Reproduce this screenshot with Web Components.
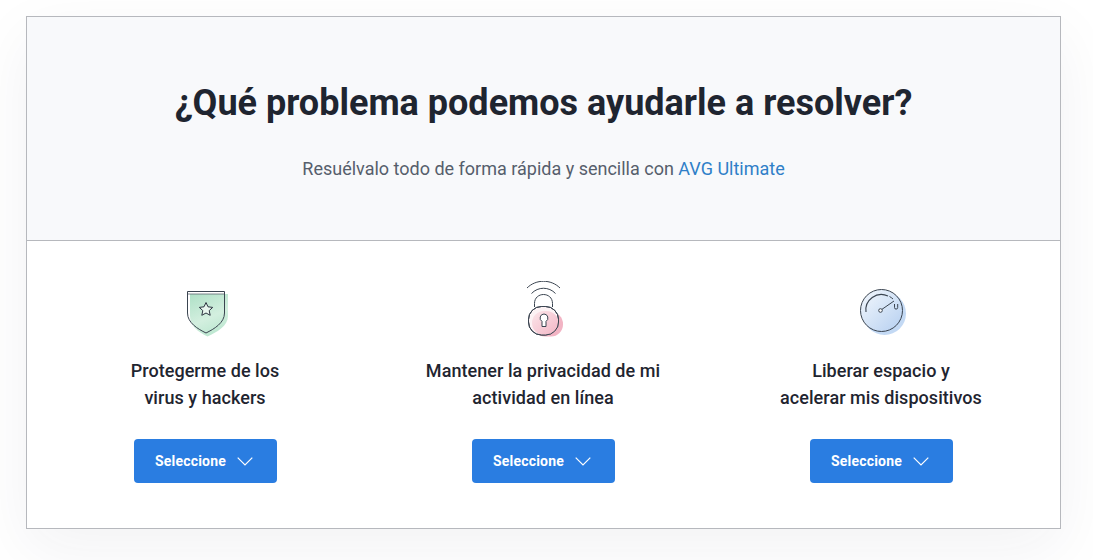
<!DOCTYPE html>
<html lang="es"><head><meta charset="utf-8"><title>AVG</title>
<style>
html,body{margin:0;height:560px;overflow:hidden;background:#fff}
body{font-family:Roboto,"Liberation Sans",sans-serif;color:#1f2530;padding:16px 32px 0 26px;box-sizing:border-box}
problem-card a{color:#2f7fc8;text-decoration:none}
</style></head><body>
<problem-card>
  <span slot="title">¿Qué problema podemos ayudarle a resolver?</span>
  <span slot="sub">Resuélvalo todo de forma rápida y sencilla con <a>AVG Ultimate</a></span>
  <problem-option>
    <svg slot="icon" width="60" height="60" viewBox="175 281 60 60" fill="none">
      <defs><linearGradient id="g1" x1="0" y1="0" x2=".4" y2="1"><stop offset="0" stop-color="#aee0c6"/><stop offset=".65" stop-color="#d3efdf"/><stop offset="1" stop-color="#bfe8d2"/></linearGradient></defs>
      <path d="M190 294H228V316C228 326 217 332 207.500 336.500C198 332 190 326 190 316Z" fill="url(#g1)"/>
      <path d="M187.500 291.500H224.500V313C224.500 323 214 329 206 333C198 329 187.500 323 187.500 313Z" stroke="#3a4450" stroke-width="1"/>
      <path d="M188 294H224" stroke="#5b6570" stroke-width=".8"/>
      <path d="M206 302.500L208 306.800L212.700 307.400L209.200 310.600L210.200 315.300L206 313L201.800 315.300L202.800 310.600L199.300 307.400L204 306.800Z" stroke="#2c3440" stroke-width="1" fill="#e8f6ee"/>
    </svg>
    <span>Protegerme de los<br>virus y hackers</span>
  </problem-option>
  <problem-option>
    <svg slot="icon" width="60" height="60" viewBox="513 281 60 60" fill="none">
      <defs><linearGradient id="g2" x1="0" y1="0" x2="1" y2="1"><stop offset="0" stop-color="#fbe6ea"/><stop offset="1" stop-color="#f3b5c5"/></linearGradient></defs>
      <path d="M527 288C536 279 551 279 560 288" stroke="#3a4450" stroke-width="1"/>
      <path d="M531.500 293.500C538 286.500 549 286.500 555.500 293.500" stroke="#3a4450" stroke-width="1"/>
      <rect x="533" y="312" width="30" height="24.500" rx="12" fill="#f2b4c4"/>
      <path d="M534.500 307V303.500C534.500 291.500 552.500 291.500 552.500 303.500V307" stroke="#3a4450" stroke-width="1"/>
      <rect x="528.500" y="306.500" width="30" height="28.500" rx="13" fill="#fcf2f4" stroke="#3a4450" stroke-width="1"/>
      <rect x="532" y="311" width="26.500" height="24" rx="12" fill="url(#g2)"/>
      <rect x="528.500" y="306.500" width="30" height="28.500" rx="13" stroke="#3a4450" stroke-width="1"/>
      <path d="M544 314a4 4 0 0 1 2 7.400V326.500H542V321.400a4 4 0 0 1 2-7.400Z" fill="#fff" stroke="#3a4450" stroke-width="1"/>
    </svg>
    <span>Mantener la privacidad de mi<br>actividad en línea</span>
  </problem-option>
  <problem-option>
    <svg slot="icon" width="60" height="60" viewBox="851 281 60 60" fill="none">
      <defs><linearGradient id="g3" x1="0" y1="0" x2="1" y2="1"><stop offset="0" stop-color="#f4f8fd"/><stop offset="1" stop-color="#b5cff0"/></linearGradient></defs>
      <circle cx="884.500" cy="313.500" r="21.500" fill="#c3d9f4"/>
      <circle cx="881.500" cy="310.500" r="21" fill="url(#g3)" stroke="#3a4450" stroke-width="1"/>
      <path d="M866 312A15.500 15.500 0 0 1 888 296" stroke="#3a4450" stroke-width="1.100"/>
      <path d="M889.500 296.500A16 16 0 0 1 893 299" stroke="#3a4450" stroke-width="1"/>
      <circle cx="880.500" cy="310.500" r="1.800" fill="#fff" stroke="#3a4450" stroke-width="1"/>
      <path d="M882 309.300L894 301" stroke="#3a4450" stroke-width="1"/>
      <path d="M894.500 304V307.500a1.600 1.600 0 0 0 3.200 0V304" stroke="#3a4450" stroke-width="1"/>
    </svg>
    <span>Liberar espacio y<br>acelerar mis dispositivos</span>
  </problem-option>
</problem-card>
<script>
class ProblemCard extends HTMLElement{
  constructor(){super();this.attachShadow({mode:'open'}).innerHTML=`<style>
  :host{display:block;width:1035px;height:513px;box-sizing:border-box;border:1px solid #b6b8bd;background:#fff;box-shadow:0 20px 60px rgba(30,40,60,.06)}
  header{height:224px;box-sizing:border-box;background:#f8f9fb;border-bottom:1px solid #b6b8bd;text-align:center;padding-top:63px}
  h1{margin:0;font:700 36px/47px Roboto,"Liberation Sans",sans-serif;color:#1f2530}
  p{margin:28px 0 0;font:400 18px/27px Roboto,"Liberation Sans",sans-serif;color:#565e6c}
  .row{display:grid;grid-template-columns:repeat(3,338px);padding:0 9px}
  </style><header><h1><slot name="title"></slot></h1><p><slot name="sub"></slot></p></header><div class="row"><slot></slot></div>`;
  }
}
customElements.define('problem-card',ProblemCard);
class ProblemOption extends HTMLElement{
  constructor(){super();this.attachShadow({mode:'open'}).innerHTML=`<style>
  :host{display:flex;flex-direction:column;align-items:center;text-align:center}
  .ico{height:60px;margin:40px 0 16px;display:flex;align-items:center;justify-content:center}
  h2{margin:0;font:500 18px/27px Roboto,"Liberation Sans",sans-serif;letter-spacing:.05px;color:#1f2530;height:54px}
  button{margin-top:28px;width:143px;height:44px;border:0;border-radius:4px;background:#2a7de1;color:#fff;font:700 14px Roboto,"Liberation Sans",sans-serif;letter-spacing:.2px;display:flex;align-items:center;justify-content:center;gap:11px;padding:0 2px 0 0}
  svg{display:block}
  </style><div class="ico"><slot name="icon"></slot></div><h2><slot></slot></h2>
  <button>Seleccione<svg width="16" height="9" viewBox="0 0 16 9" fill="none"><path d="M.7.7L8 8L15.300.7" stroke="#fff" stroke-width="1.200"/></svg></button>`;
  }
}
customElements.define('problem-option',ProblemOption);
</script>
</body></html>
